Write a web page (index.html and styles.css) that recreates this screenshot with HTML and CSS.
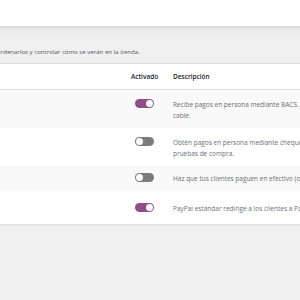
FILE: index.html
```html
<!DOCTYPE html>
<html lang="es">
<head>
  <meta charset="UTF-8">
  <title>Pagos</title>
  <link rel="stylesheet" href="styles.css">
</head>
<body>
<div class="page">

  <div class="topbar"></div>

  <div class="intro">
    <p class="intro-text">ordenarlos y controlar cómo se verán en la tienda.</p>
  </div>

  <div class="gateways">
    <div class="row head">
      <div class="cell name"></div>
      <div class="cell status">Activado</div>
      <div class="cell desc">Descripción</div>
    </div>

    <div class="row alt">
      <div class="cell name"></div>
      <div class="cell status"><span class="toggle on"></span></div>
      <div class="cell desc">Recibe pagos en persona mediante BACS. Más comúnmente conocido como transferencia directa/<br>cable.</div>
    </div>

    <div class="row">
      <div class="cell name"></div>
      <div class="cell status"><span class="toggle"></span></div>
      <div class="cell desc">Obtén pagos en persona mediante cheque. Esta pasarela de pago también puede ser útil para<br>pruebas de compra.</div>
    </div>

    <div class="row alt single">
      <div class="cell name"></div>
      <div class="cell status"><span class="toggle"></span></div>
      <div class="cell desc">Haz que tus clientes paguen en efectivo (o por otros medios) a la entrega.</div>
    </div>

    <div class="row tall">
      <div class="cell name"></div>
      <div class="cell status"><span class="toggle on"></span></div>
      <div class="cell desc">PayPal estándar redirige a los clientes a PayPal para que introduzcan su información de pago.</div>
    </div>
  </div>

</div>
</body>
</html>
```

FILE: styles.css
```css
:root{
  --page-bg:#f0f0f1;
  --border:#dcdcde;
  --text:#1d2327;
  --muted:#6b6f74;
  --woo:#8e4f88;
  --off:#7c7c7c;
}

*{ box-sizing:border-box; }
html,body{
  margin:0; padding:0;
  width:100%; height:100%;
  overflow:hidden;
  background:var(--page-bg);
  font-family:'Open Sans', 'Noto Sans', sans-serif;
  font-size:6.5px;
  color:var(--muted);
}

.page{ width:100%; }

/* ================= TOP ================= */
.topbar{
  height:26px;
  background:#fff;
}

.intro{
  height:37px;
  padding-top:20px;
  background: linear-gradient(#d6d6d8 0, #ebebec 4px, #f0f0f1 12px);
}
.intro-text{
  margin:0 0 0 -3px;
  font-size:6.1px;
  line-height:11px;
  white-space:nowrap;
  color:#50575e;
}

/* ================= TABLE ================= */
.gateways{
  background:#fff;
  border-top:1px solid var(--border);
  border-bottom:2px solid #e2e2e4;
}

.row{
  display:grid;
  grid-template-columns:130px 42px 1fr;
  padding:9px 0 7px;
  line-height:11px;
}
.row.alt{ background:#f9f9f9; }
.row.single{ padding:7px 0; }
.row.tall{ padding:12px 0 10px; }

.row.head{
  padding:7px 0;
  border-bottom:1px solid #e4e4e6;
  color:var(--text);
  font-weight:600;
}
.row.head .status{ padding-left:1px; }

.cell.desc{
  white-space:nowrap;
  overflow:hidden;
  padding-left:1px;
}

.status{ display:flex; align-items:flex-start; }

.toggle{
  position:relative;
  display:block;
  width:19px; height:9px;
  margin:0 0 0 5px;
  border-radius:999px;
  background:var(--off);
}
.toggle::after{
  content:"";
  position:absolute;
  top:1px; left:1px;
  width:7px; height:7px;
  border-radius:999px;
  background:#fff;
}
.toggle.on{ background:var(--woo); }
.toggle.on::after{ left:auto; right:1px; }
```
